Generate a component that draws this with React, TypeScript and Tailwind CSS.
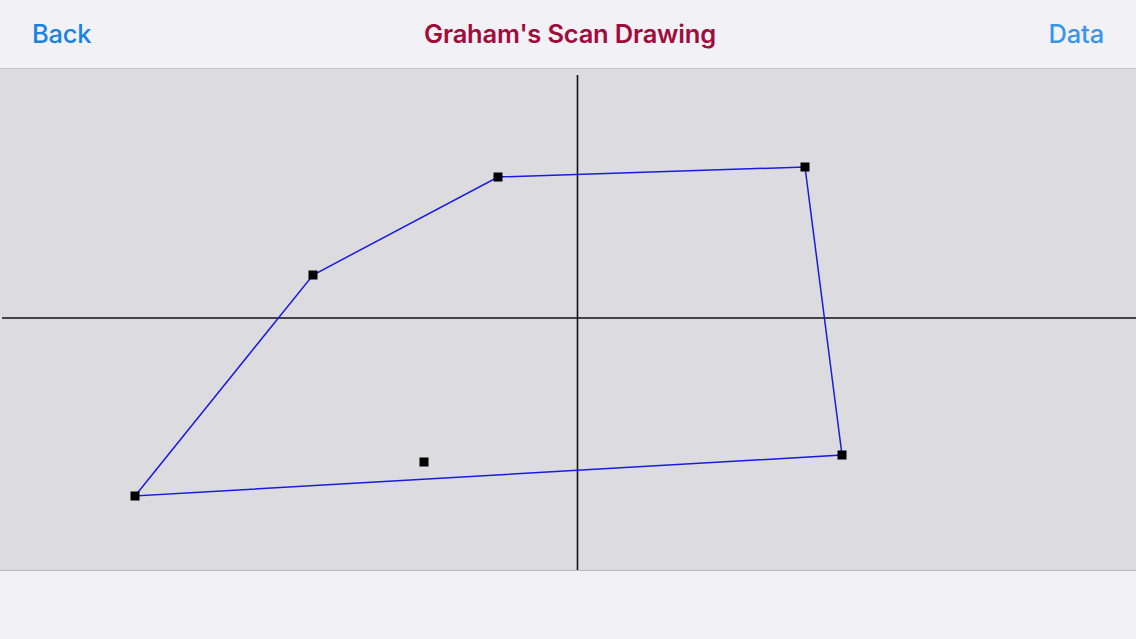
import React from "react";

const OFFSET = 69;

const hull: [number, number][] = [
  [135, 496],
  [313, 275],
  [498, 177],
  [805, 167],
  [842, 455],
];

const points: [number, number][] = [...hull, [424, 462]];

export default function App() {
  const poly = hull.map(([x, y]) => `${x},${y - OFFSET}`).join(" ");

  return (
    <div
      className="flex h-[639px] w-[1136px] flex-col overflow-hidden bg-[#f2f1f6]"
      style={{ fontFamily: "Inter, 'Noto Sans', sans-serif" }}
    >
      <header className="flex h-[69px] shrink-0 items-center justify-between border-b border-[#c4c3c8] px-8 pt-[1px]">
        <button className="text-[25.5px] font-medium tracking-[-0.2px] text-[#1a82e2]">Back</button>
        <h1 className="text-[25.5px] font-semibold tracking-[-0.2px] text-[#a00c3c]">Graham's Scan Drawing</h1>
        <button className="text-[25.5px] font-medium tracking-[-0.2px] text-[#3a95ea]">Data</button>
      </header>

      <div className="h-[502px] shrink-0 border-b border-[#b9b8bd] bg-[#dcdbe0]">
        <svg viewBox="0 0 1136 501" className="h-full w-full">
          <line x1={577.5} y1={6} x2={577.5} y2={501} stroke="#111" strokeWidth={1.6} />
          <line x1={2} y1={249} x2={1136} y2={249} stroke="#111" strokeWidth={1.6} />
          <polygon points={poly} fill="none" stroke="#1a1ae0" strokeWidth={1.5} />
          {points.map(([x, y], i) => (
            <rect key={i} x={x - 4.5} y={y - OFFSET - 4.5} width={9} height={9} fill="#000" />
          ))}
        </svg>
      </div>

      <div className="flex-1" />
    </div>
  );
}
